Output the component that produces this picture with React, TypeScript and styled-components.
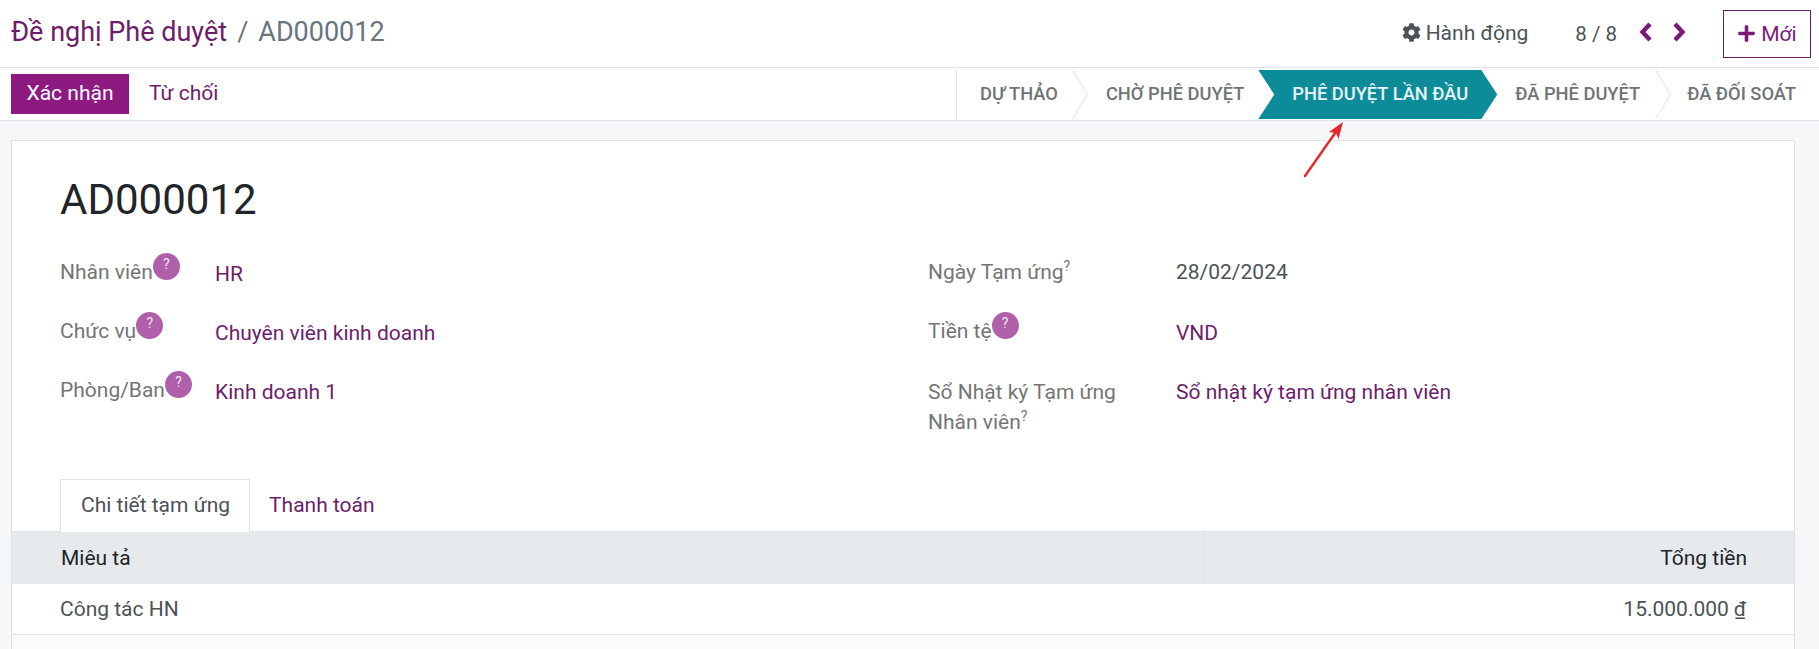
import React from "react";
import styled, { createGlobalStyle } from "styled-components";
import { FaCog, FaPlus } from "react-icons/fa";

const GlobalStyle = createGlobalStyle`
  html, body {
    margin: 0;
    padding: 0;
    height: 100%;
    overflow: hidden;
    background: #f6f7f9;
    font-family: Roboto, "Noto Sans", sans-serif;
    font-size: 21px;
    color: #4c4c4c;
  }
  * { box-sizing: border-box; }
`;

const Page = styled.div`
  position: relative;
  width: 1819px;
  height: 649px;
  overflow: hidden;
`;

const TopBar = styled.header`
  display: flex;
  align-items: center;
  justify-content: space-between;
  height: 68px;
  padding: 0 8px 0 11px;
  background: #fff;
  border-bottom: 1px solid #dee2e6;
`;

const Breadcrumb = styled.div`
  display: flex;
  align-items: center;
  font-size: 27px;
  padding-bottom: 3px;
`;

const CrumbLink = styled.a`
  color: #6c1d6c;
`;

const CrumbSep = styled.span`
  color: #6c757d;
  margin: 0 10px;
`;

const CrumbCurrent = styled.span`
  color: #667580;
`;

const TopActions = styled.div`
  display: flex;
  align-items: center;
`;

const ActionMenu = styled.div`
  display: flex;
  align-items: center;
  gap: 5px;
  padding-bottom: 2px;
  color: #4c5257;
  svg { font-size: 19px; }
`;

const Pager = styled.div`
  display: flex;
  align-items: center;
  margin-left: 47px;
  color: #4c5257;
  font-size: 20.5px;
`;

const PagerArrow = styled.svg<{ $first?: boolean }>`
  flex: none;
  width: 13px;
  height: 20px;
  margin-left: ${(p) => (p.$first ? "22px" : "21px")};
  margin-bottom: 4px;
  fill: none;
  stroke: #7c1a78;
  stroke-width: 4.4;
`;

const NewButton = styled.button`
  display: flex;
  align-items: center;
  justify-content: center;
  gap: 5px;
  width: 88px;
  height: 48px;
  margin-left: 37px;
  padding: 0;
  background: #fff;
  border: 1px solid #6c1d6c;
  color: #7c1a78;
  font: inherit;
`;

const StatusRow = styled.div`
  display: flex;
  align-items: stretch;
  justify-content: space-between;
  height: 53px;
  padding: 2px 0 1px 11px;
  background: #fff;
  border-bottom: 1px solid #dee2e6;
`;

const ControlButtons = styled.div`
  display: flex;
  align-items: center;
  padding-bottom: 1px;
`;

const ConfirmButton = styled.button`
  width: 118px;
  height: 40px;
  border: 0;
  padding: 0 0 2px;
  background: #8c1a80;
  color: #fff;
  font: inherit;
`;

const RejectButton = styled.button`
  margin-left: 20px;
  border: 0;
  padding: 0 0 2px;
  background: none;
  color: #6c1d6c;
  font: inherit;
`;

const Stages = styled.div`
  display: flex;
  align-items: stretch;
  border-left: 1px solid #dee2e6;
`;

const Stage = styled.div<{ $active?: boolean; $left: number; $right: number }>`
  display: flex;
  align-items: center;
  padding-left: ${(p) => p.$left}px;
  padding-right: ${(p) => p.$right}px;
  padding-bottom: 3px;
  font-size: 18.3px;
  font-weight: 500;
  white-space: nowrap;
  color: ${(p) => (p.$active ? "#e9f4f5" : "#6f7378")};
  background: ${(p) => (p.$active ? "#0c8c99" : "transparent")};
  clip-path: ${(p) =>
    p.$active
      ? "polygon(0 0, calc(100% - 16px) 0, 100% 50%, calc(100% - 16px) 100%, 0 100%, 16px 50%)"
      : "none"};
`;

const StageSep = styled.svg`
  flex: none;
  width: 16px;
  height: 49px;
`;

const Sheet = styled.main`
  margin: 19px 24px 0 11px;
  height: 520px;
  background: #fff;
  border: 1px solid #dee2e6;
  border-bottom: 0;
`;

const RecordName = styled.h1`
  margin: 0;
  padding: 35px 0 0 48px;
  font-size: 42px;
  font-weight: 400;
  line-height: 48px;
  color: #212529;
`;

const FormColumns = styled.div`
  display: grid;
  grid-template-columns: 868px 1fr;
  padding: 33px 0 0 48px;
  height: 255px;
`;

const FieldGroup = styled.div<{ $labelWidth: number; $gap: number }>`
  display: grid;
  grid-template-columns: ${(p) => p.$labelWidth}px 1fr;
  grid-auto-rows: min-content;
  row-gap: ${(p) => p.$gap}px;
  align-content: start;
`;

const Label = styled.div`
  color: #757575;
  line-height: 30px;
`;

const Value = styled.div<{ $plain?: boolean; $flush?: boolean }>`
  color: ${(p) => (p.$plain ? "#4c5257" : "#6c1d6c")};
  line-height: 30px;
  padding-top: ${(p) => (p.$flush ? 0 : 2)}px;
`;

const HelpBadge = styled.span`
  position: relative;
  top: -5px;
  display: inline-flex;
  align-items: center;
  justify-content: center;
  width: 27px;
  height: 27px;
  border-radius: 50%;
  background: #b060aa;
  color: #f3e6f2;
  font-size: 14px;
  line-height: 27px;
  vertical-align: 5px;
  padding-bottom: 4px;
`;

const Sup = styled.sup`
  font-size: 14px;
  line-height: 0;
  color: #757575;
`;

const TabBar = styled.div`
  display: flex;
  height: 52px;
  padding-left: 48px;
`;

const Tab = styled.div<{ $active?: boolean }>`
  display: flex;
  align-items: center;
  height: 53px;
  padding: ${(p) => (p.$active ? "0 19px 2px 20px" : "0 20px 2px 18px")};
  color: ${(p) => (p.$active ? "#4c5257" : "#6c1d6c")};
  background: ${(p) => (p.$active ? "#fff" : "transparent")};
  border: 1px solid ${(p) => (p.$active ? "#dee2e6" : "transparent")};
  border-bottom: 0;
  z-index: 1;
`;

const LinesTable = styled.div`
  display: grid;
  grid-template-columns: 1191px 1fr;
`;

const HeadCell = styled.div<{ $right?: boolean }>`
  display: flex;
  align-items: center;
  height: 53px;
  padding: ${(p) => (p.$right ? "0 47px 0 0" : "0 0 0 49px")};
  justify-content: ${(p) => (p.$right ? "flex-end" : "flex-start")};
  background: #e7eaed;
  color: #212529;
  border-top: 1px solid #dee2e6;
  border-left: ${(p) => (p.$right ? "1px solid #e0e3e6" : "0")};
`;

const BodyCell = styled.div<{ $right?: boolean }>`
  display: flex;
  align-items: center;
  height: 51px;
  padding: ${(p) => (p.$right ? "0 48px 0 0" : "0 0 0 48px")};
  justify-content: ${(p) => (p.$right ? "flex-end" : "flex-start")};
  color: #4c5257;
  border-bottom: 1px solid #dee2e6;
`;

const Currency = styled.span`
  margin-left: 5px;
  text-decoration: underline;
`;

const TableFoot = styled.div`
  height: 20px;
  background: #fbfbfb;
`;

const Annotation = styled.svg`
  position: absolute;
  left: 1295px;
  top: 115px;
  width: 60px;
  height: 70px;
`;

const Separator = () => (
  <StageSep viewBox="0 0 16 49">
    <path d="M0.5 0 L15.5 24.5 L0.5 49" fill="none" stroke="#dee2e6" strokeWidth="1" />
  </StageSep>
);

export default function App() {
  return (
    <Page>
      <GlobalStyle />
      <TopBar>
        <Breadcrumb>
          <CrumbLink>Đề nghị Phê duyệt</CrumbLink>
          <CrumbSep>/</CrumbSep>
          <CrumbCurrent>AD000012</CrumbCurrent>
        </Breadcrumb>
        <TopActions>
          <ActionMenu>
            <FaCog />
            Hành động
          </ActionMenu>
          <Pager>
            8 / 8
            <PagerArrow $first viewBox="0 0 13 20">
              <path d="M11 2 L3.5 10 L11 18" />
            </PagerArrow>
            <PagerArrow viewBox="0 0 13 20">
              <path d="M2 2 L9.5 10 L2 18" />
            </PagerArrow>
          </Pager>
          <NewButton>
            <FaPlus size={19} />
            Mới
          </NewButton>
        </TopActions>
      </TopBar>

      <StatusRow>
        <ControlButtons>
          <ConfirmButton>Xác nhận</ConfirmButton>
          <RejectButton>Từ chối</RejectButton>
        </ControlButtons>
        <Stages>
          <Stage $left={23} $right={14}>DỰ THẢO</Stage>
          <Separator />
          <Stage $left={18} $right={14}>CHỜ PHÊ DUYỆT</Stage>
          <Stage $active $left={34} $right={29}>PHÊ DUYỆT LẦN ĐẦU</Stage>
          <Stage $left={18} $right={15}>ĐÃ PHÊ DUYỆT</Stage>
          <Separator />
          <Stage $left={16} $right={23}>ĐÃ ĐỐI SOÁT</Stage>
        </Stages>
      </StatusRow>

      <Sheet>
        <RecordName>AD000012</RecordName>
        <FormColumns>
          <FieldGroup $labelWidth={155} $gap={27}>
            <Label>Nhân viên<HelpBadge>?</HelpBadge></Label>
            <Value>HR</Value>
            <Label>Chức vụ<HelpBadge>?</HelpBadge></Label>
            <Value>Chuyên viên kinh doanh</Value>
            <Label>Phòng/Ban<HelpBadge>?</HelpBadge></Label>
            <Value>Kinh doanh 1</Value>
          </FieldGroup>
          <FieldGroup $labelWidth={248} $gap={29}>
            <Label>Ngày Tạm ứng<Sup>?</Sup></Label>
            <Value $plain $flush>28/02/2024</Value>
            <Label>Tiền tệ<HelpBadge>?</HelpBadge></Label>
            <Value>VND</Value>
            <Label>Sổ Nhật ký Tạm ứng<br />Nhân viên<Sup>?</Sup></Label>
            <Value $flush>Sổ nhật ký tạm ứng nhân viên</Value>
          </FieldGroup>
        </FormColumns>

        <TabBar>
          <Tab $active>Chi tiết tạm ứng</Tab>
          <Tab>Thanh toán</Tab>
        </TabBar>

        <LinesTable>
          <HeadCell>Miêu tả</HeadCell>
          <HeadCell $right>Tổng tiền</HeadCell>
          <BodyCell>Công tác HN</BodyCell>
          <BodyCell $right>
            15.000.000<Currency>₫</Currency>
          </BodyCell>
        </LinesTable>
        <TableFoot />
      </Sheet>

      <Annotation viewBox="0 0 60 70">
        <path d="M10 61 L45 11" stroke="#e8262b" strokeWidth="2.4" strokeLinecap="round" />
        <path d="M48 7 L43.5 24 L41 18 L34 17 Z" fill="#e8262b" />
      </Annotation>
    </Page>
  );
}
